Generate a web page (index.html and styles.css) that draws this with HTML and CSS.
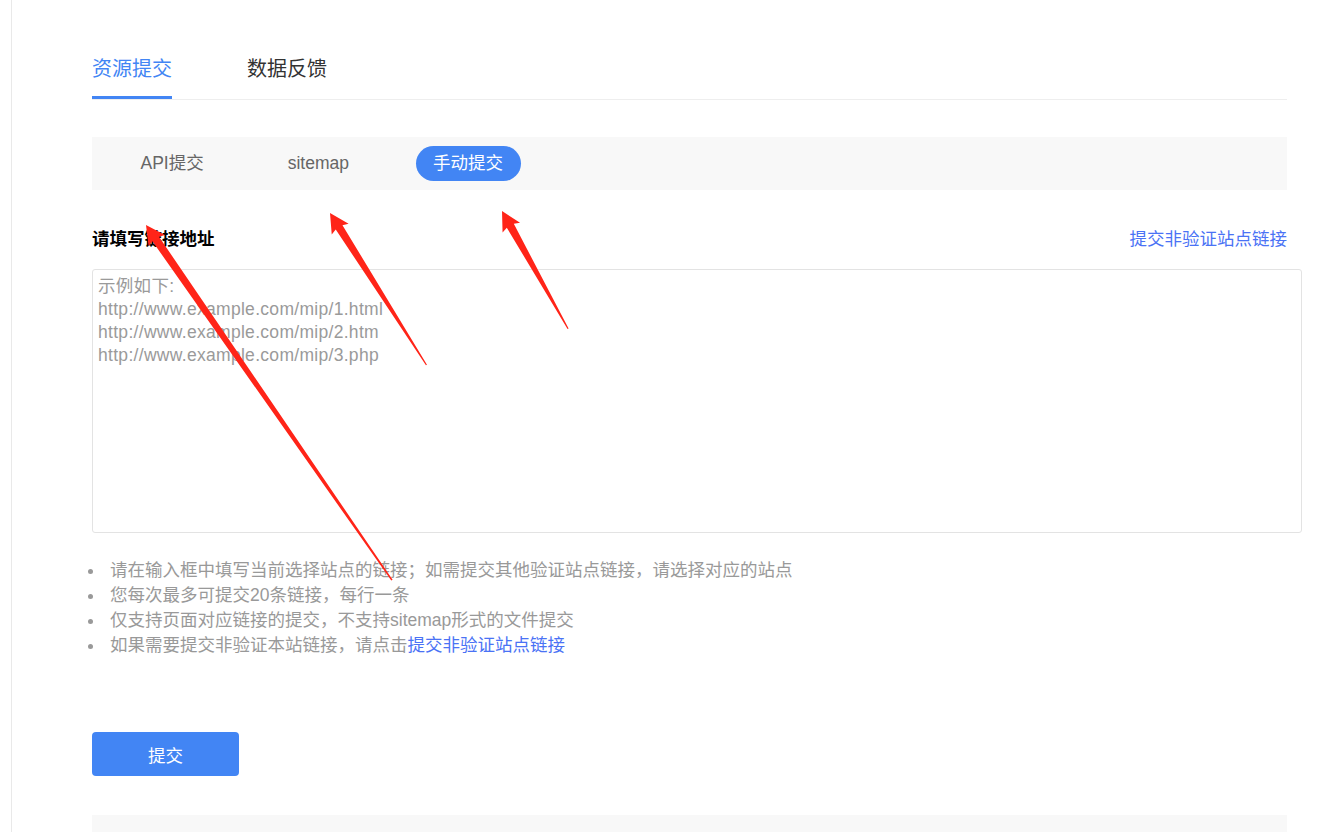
FILE: index.html
```html
<!DOCTYPE html>
<html lang="zh-CN">
<head>
<meta charset="utf-8">
<title>资源提交</title>
<link rel="stylesheet" href="styles.css">
</head>
<body>
<div class="page">
  <div class="main">
    <div class="tabs">
      <div class="tab active">资源提交</div>
      <div class="tab">数据反馈</div>
    </div>

    <div class="subtabs">
      <div class="subtab">API提交</div>
      <div class="subtab">sitemap</div>
      <div class="subtab on">手动提交</div>
    </div>

    <div class="label-row">
      <span class="label">请填写链接地址</span>
      <a class="link" href="#">提交非验证站点链接</a>
    </div>

    <textarea class="urls" placeholder="示例如下:
http://www.example.com/mip/1.html
http://www.example.com/mip/2.htm
http://www.example.com/mip/3.php"></textarea>

    <ul class="tips">
      <li>请在输入框中填写当前选择站点的链接；如需提交其他验证站点链接，请选择对应的站点</li>
      <li>您每次最多可提交20条链接，每行一条</li>
      <li>仅支持页面对应链接的提交，不支持sitemap形式的文件提交</li>
      <li>如果需要提交非验证本站链接，请点击<a class="link" href="#">提交非验证站点链接</a></li>
    </ul>

    <button class="submit" type="button">提交</button>

    <div class="footer-box"></div>
  </div>
</div>

<svg class="annotations" width="1336" height="832" viewBox="0 0 1336 832">
  <g fill="#ff2418">
    <polygon transform="translate(146 225) rotate(235.3)" points="0,0 -19,-10 -17,-4 -432,-0.8 -432,0.8 -17,4 -19,10"/>
    <polygon transform="translate(330 213) rotate(237.6)" points="0,0 -19,-10 -17,-4 -180,-0.6 -180,0.6 -17,4 -19,10"/>
    <polygon transform="translate(502 211) rotate(240.7)" points="0,0 -19,-10 -17,-4 -135,-0.6 -135,0.6 -17,4 -19,10"/>
  </g>
</svg>
</body>
</html>
```
FILE: styles.css
```css
* { box-sizing: border-box; }

html, body {
  margin: 0;
  padding: 0;
  background: #fff;
}

body {
  position: relative;
  font-family: "Liberation Sans", "Noto Sans CJK SC", sans-serif;
  color: #333;
  overflow: hidden;
  height: 832px;
}

.page {
  margin-left: 11px;
  border-left: 1px solid #e9e9e9;
  min-height: 832px;
  padding: 55px 0 0 80px;
}

.main {
  width: 1195px;
}

.tabs {
  display: flex;
  gap: 75px;
  border-bottom: 1px solid #eeeeee;
}

.tab {
  font-size: 20px;
  line-height: 28px;
  padding-bottom: 13px;
  border-bottom: 3px solid transparent;
  color: #333;
}

.tab.active {
  color: #4285f4;
  border-bottom-color: #4285f4;
}

.subtabs {
  margin-top: 37px;
  height: 53px;
  background: #f8f8f8;
  display: flex;
  align-items: center;
  gap: 49px;
  padding-left: 31px;
}

.subtab {
  height: 35px;
  line-height: 35px;
  padding: 0 17.5px;
  border-radius: 18px;
  font-size: 17.5px;
  color: #666;
}

.subtab.on {
  background: #4285f4;
  color: #fff;
}

.label-row {
  margin-top: 37px;
  display: flex;
  justify-content: space-between;
  align-items: center;
  line-height: 24px;
}

.label {
  font-size: 17.5px;
  font-weight: bold;
  color: #000;
}

.link {
  font-size: 17.5px;
  color: #4a72f5;
  text-decoration: none;
}

.urls {
  display: block;
  margin-top: 18px;
  width: 1210px;
  height: 264px;
  border: 1px solid #e3e3e3;
  border-radius: 3px;
  padding: 5px 5px;
  font-family: "Liberation Sans", "Noto Sans CJK SC", sans-serif;
  font-size: 17.5px;
  letter-spacing: 0.3px;
  line-height: 23px;
  resize: none;
  outline: none;
  color: #333;
}

.urls::placeholder {
  color: #9a9a9a;
}

.tips {
  list-style: none;
  margin: 25px 0 0;
  padding: 0 0 0 18px;
  font-size: 17.5px;
  line-height: 25px;
  color: #999;
}

.tips li::before {
  content: "";
  display: inline-block;
  width: 5px;
  height: 5px;
  border-radius: 50%;
  background: #999;
  margin-left: -22px;
  margin-right: 17px;
  vertical-align: middle;
}

.submit {
  display: block;
  margin-top: 74px;
  width: 147px;
  height: 44px;
  border: none;
  border-radius: 4px;
  background: #4285f4;
  color: #fff;
  font-family: "Liberation Sans", "Noto Sans CJK SC", sans-serif;
  font-size: 17.5px;
}

.footer-box {
  margin-top: 39px;
  height: 60px;
  background: #f8f8f8;
}

.annotations {
  position: absolute;
  left: 0;
  top: 0;
  pointer-events: none;
}
```
